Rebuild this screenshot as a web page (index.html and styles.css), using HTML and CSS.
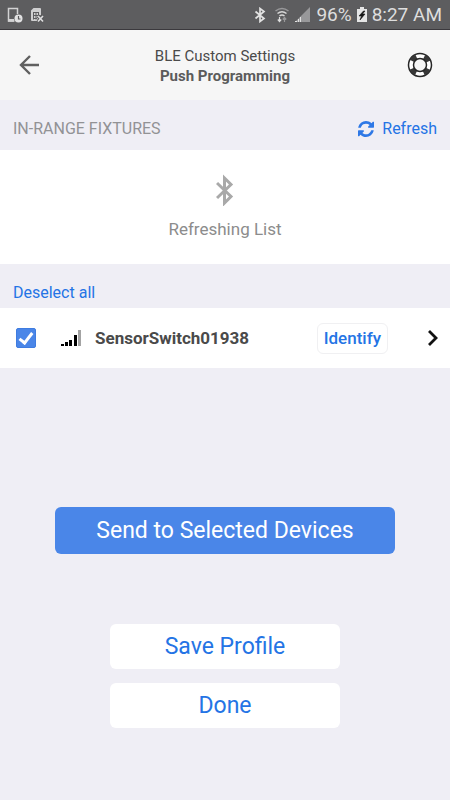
FILE: index.html
```html
<!DOCTYPE html>
<html lang="en">
<head>
<meta charset="utf-8">
<meta name="viewport" content="width=device-width, initial-scale=1">
<title>Push Programming</title>
<link rel="stylesheet" href="styles.css">
</head>
<body>
<div class="status">
  <div class="status-group">
    <svg width="16" height="16" viewBox="0 0 16 16" aria-hidden="true">
      <path d="M7.500 14H1.500V1.500H10.500V7" fill="none" stroke="#d2d2d3" stroke-width="1.500"/>
      <path d="M1 12h6v2.700H1z" fill="#d2d2d3"/>
      <circle cx="11.500" cy="11.500" r="4" fill="#e2e2e3"/>
      <path d="M11.500 9v3h2" fill="none" stroke="#58585a" stroke-width="1.200"/>
    </svg>
    <svg width="14" height="16" viewBox="0 0 14 16" aria-hidden="true">
      <path d="M3.500 1H10q1 0 1 1V8L8 9v5H2q-1 0-1-1V3.500z" fill="#cfcfd0"/>
      <path d="M3 5.500h6M3 8.500h5M3 11.500h4M3.500 5v7.500M6 5v7.500M8.500 5v4" stroke="#5c5c5e" stroke-width="1" fill="none"/>
      <path d="M8 9l5 5.500M13 9l-5 5.500" stroke="#58585a" stroke-width="3.500"/>
      <path d="M8 9l5 5.500M13 9l-5 5.500" stroke="#dcdcdd" stroke-width="1.700"/>
    </svg>
  </div>
  <div class="status-group status-right">
    <svg width="12" height="16" viewBox="0 0 12 16" aria-hidden="true"><path d="M1.500 4.500l8.500 7L6 14.500v-13l4 3-8.500 7" fill="none" stroke="#e2e2e2" stroke-width="1.700"/></svg>
    <svg class="wifi" width="16" height="16" viewBox="0 0 16 16" aria-hidden="true">
      <path d="M1.500 4Q8-1 14.500 4" fill="none" stroke="#98989a" stroke-width="1.500"/>
      <path d="M3.500 6.500Q8 3 12.500 6.500M5.500 9Q8 7 10.500 9" fill="none" stroke="#d8d8d8" stroke-width="1.500"/>
      <path d="M5.500 10v4M3.800 12.500l1.700 2 1.700-2" fill="none" stroke="#dedede" stroke-width="1.200"/>
      <path d="M10.500 15v-4M8.800 12.500l1.700-2 1.700 2" fill="none" stroke="#98989a" stroke-width="1.200"/>
    </svg>
    <svg width="16" height="16" viewBox="0 0 16 16" aria-hidden="true">
      <path d="M0 15L15 0v15z" fill="#98989a"/>
      <path d="M0 14h2v1H0zM3 12h1v3H3zM5 10h1v5H5z" fill="#e0e0e0"/>
    </svg>
    <span class="percent">96%</span>
    <svg width="10" height="16" viewBox="0 0 10 16" aria-hidden="true">
      <path d="M3 0h4v2h3v13H0V2h3z" fill="#e5e5e5"/>
      <path d="M6.500 4L2 9h2.500L3 13l5-6H5.500L8 4z" fill="#151515" stroke="#151515" stroke-width="0.600"/>
    </svg>
    <span class="clock">8:27 AM</span>
  </div>
</div>
<header class="topbar">
  <button class="icon-button" type="button" aria-label="Back">
    <svg width="22" height="22" viewBox="0 0 22 22"><path d="M20 11H2M11 2l-9 9 9 9" fill="none" stroke="#606060" stroke-width="2.400"/></svg>
  </button>
  <h1 class="heading"><span class="heading-top">BLE Custom Settings</span><span class="heading-main">Push Programming</span></h1>
  <button class="icon-button" type="button" aria-label="Help">
    <svg width="26" height="26" viewBox="0 0 26 26">
      <circle cx="13" cy="13" r="11.500" fill="#fff" stroke="#262626" stroke-width="1.500"/>
      <circle cx="13" cy="13" r="9" fill="none" stroke="#373737" stroke-width="5" stroke-dasharray="6.137 8" stroke-dashoffset="-4"/>
      <circle cx="13" cy="13" r="6.500" fill="#f6f6f6" stroke="#262626" stroke-width="1.500"/>
    </svg>
  </button>
</header>
<main>
  <section>
    <div class="section-bar">
      <h2 class="section-title">IN-RANGE FIXTURES</h2>
      <button class="refresh" type="button">
        <svg width="16" height="16" viewBox="0 0 1536 1536" aria-hidden="true"><path fill="#2e78e6" d="M1511 928q0 5-1 7-64 268-268 434.500T764 1536q-146 0-282.500-55T238 1324l-129 129q-19 19-45 19t-45-19-19-45V960q0-26 19-45t45-19h448q26 0 45 19t19 45-19 45l-137 137q71 66 161 102t187 36q134 0 250-65t186-179q11-17 53-117 8-23 30-23h192q13 0 22.500 9.500t9.500 22.500zM1536 128v448q0 26-19 45t-45 19h-448q-26 0-45-19t-19-45 19-45l138-138Q969 256 768 256q-134 0-250 65T332 500q-11 17-53 117-8 23-30 23H50q-13 0-22.500-9.500T18 608v-7q65-268 270-434.500T768 0q146 0 284 55.500T1297 212l130-129q19-19 45-19t45 19 19 45z"/></svg>
        <span>Refresh</span>
      </button>
    </div>
    <div class="loading" role="status">
      <svg width="18" height="32" viewBox="0 0 18 32" aria-hidden="true"><path d="M1 9l14 13.500L8.500 29V4l6.500 6.500L1 24" fill="none" stroke="#a9a9a9" stroke-width="3"/></svg>
      <span>Refreshing List</span>
    </div>
  </section>
  <section>
    <div class="select-bar"><button class="text-button" type="button">Deselect all</button></div>
    <div class="device">
      <input class="check" type="checkbox" id="device-1" checked>
      <svg class="signal" width="20" height="16" viewBox="0 0 20 16" aria-hidden="true"><path d="M0 14h3v2H0zM4 12h3v4H4zM8 10h3v6H8zM13 5h3v11h-3z"/><path d="M17 0h3v16h-3z" fill="#a3a3a3"/></svg>
      <label class="device-name" for="device-1">SensorSwitch01938</label>
      <button class="identify" type="button">Identify</button>
      <button class="chevron" type="button" aria-label="Open SensorSwitch01938">
        <svg width="12" height="16" viewBox="0 0 12 16"><path d="M1 1l7 7-7 7" fill="none" stroke="#111" stroke-width="2.800"/></svg>
      </button>
    </div>
  </section>
  <div class="actions">
    <button class="action action-send" type="button">Send to Selected Devices</button>
    <button class="action action-plain" type="button">Save Profile</button>
    <button class="action action-plain" type="button">Done</button>
  </div>
</main>
</body>
</html>
```
FILE: styles.css
```css
*,
*::before {
  box-sizing: border-box;
}

body {
  margin: 0;
  min-height: 100vh;
  background: #efeef5;
  color: #4a4a4a;
  font-family: Roboto, "Liberation Sans", sans-serif;
  font-size: 17px;
  line-height: 20px;
}

button {
  padding: 0;
  border: 0;
  background: none;
  color: #2474e5;
  font: inherit;
  cursor: pointer;
}

svg {
  display: block;
  flex: none;
}

.status {
  display: flex;
  justify-content: space-between;
  height: 30px;
  padding: 1px 8px 0 7px;
  border-bottom: 1px solid #3b393d;
  background: #5d5d5f;
  color: #dedede;
  font-size: 19px;
}

.status-group {
  display: flex;
  align-items: center;
  gap: 7px;
}

.status-right {
  gap: 5px;
}

.wifi {
  margin-left: 3px;
}

.topbar {
  display: flex;
  align-items: center;
  justify-content: space-between;
  height: 70px;
  padding: 0 17px;
  background: #f6f6f6;
}

.icon-button {
  display: flex;
  align-items: center;
  justify-content: center;
  width: 26px;
  height: 26px;
}

.heading {
  display: flex;
  flex-direction: column;
  margin: 0;
  padding-top: 2px;
  font-size: 15px;
  font-weight: 400;
  text-align: center;
}

.heading-main {
  color: #5b5b5b;
  font-weight: 700;
}

.section-bar {
  display: flex;
  align-items: center;
  justify-content: space-between;
  height: 50px;
  padding: 7px 13px 0;
}

.section-title {
  margin: 0;
  color: #929295;
  font-size: 16px;
  font-weight: 400;
}

.refresh {
  display: flex;
  align-items: center;
  gap: 8px;
  font-size: 16px;
}

.loading {
  display: flex;
  flex-direction: column;
  align-items: center;
  gap: 13px;
  padding: 24px 0 25px;
  background: #fff;
  color: #8c8c8c;
}

.select-bar {
  display: flex;
  align-items: center;
  height: 44px;
  padding: 14px 13px 0;
}

.text-button {
  font-size: 16px;
}

.device {
  display: flex;
  align-items: center;
  height: 60px;
  padding: 0 10px 0 16px;
  background: #fff;
}

.check {
  appearance: none;
  flex: none;
  display: grid;
  place-items: start center;
  width: 20px;
  height: 20px;
  margin: 0;
  padding-top: 1px;
  border: 1px solid #3f7ce0;
  border-radius: 2px;
  background: #4a86e8;
}

.check:checked::before {
  content: "";
  width: 8px;
  height: 14px;
  border: solid #fff;
  border-width: 0 3px 3px 0;
  transform: rotate(38deg);
}

.signal {
  margin: 0 14px 0 25px;
}

.device-name {
  flex: 1;
  font-weight: 700;
}

.identify {
  height: 31px;
  padding: 0 6px;
  border: 1px solid #f0f0f2;
  border-radius: 6px;
  font-weight: 500;
}

.chevron {
  margin-left: 40px;
}

.actions {
  display: flex;
  flex-direction: column;
  align-items: center;
  gap: 14px;
  padding: 139px 55px 72px;
}

.action {
  width: 100%;
  max-width: 230px;
  height: 45px;
  padding-top: 1px;
  border-radius: 6px;
  font-size: 23px;
}

.action-send {
  max-width: none;
  height: 47px;
  margin-bottom: 56px;
  background: #4a86e8;
  color: #fff;
}

.action-plain {
  background: #fff;
}
```
